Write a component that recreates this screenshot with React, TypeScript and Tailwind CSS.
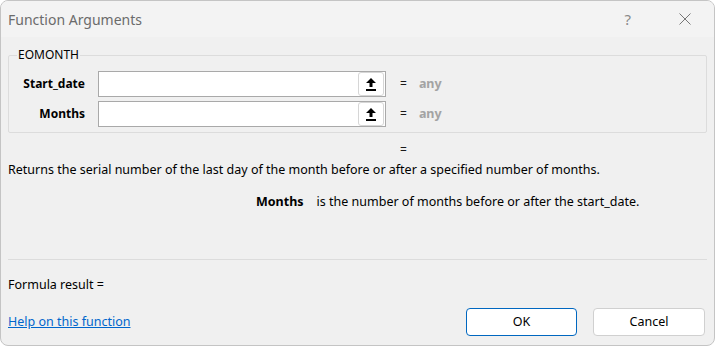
import React from "react";

const ui = { fontFamily: '"Noto Sans", "Open Sans", sans-serif' };

function UploadIcon() {
  return (
    <svg width="10" height="13" viewBox="0 0 10 13" className="block">
      <path d="M5 0 L10 5 L6.5 5 L6.5 9 L3.5 9 L3.5 5 L0 5 Z" fill="#000" />
      <rect x="0" y="11" width="10" height="2" fill="#000" />
    </svg>
  );
}

function ArgRow({ label }: { label: string }) {
  return (
    <div className="flex items-center h-[26px]">
      <div className="w-[76px] text-right text-[12px] font-bold text-black">{label}</div>
      <div className="ml-[13px] w-[288px] h-[26px] border border-[#a9a9a9] bg-white flex justify-end items-center pr-px">
        <button className="w-[26px] h-[24px] rounded-[3px] border border-[#d6d6d6] bg-white flex items-center justify-center">
          <UploadIcon />
        </button>
      </div>
      <span className="ml-[14px] text-[12px] text-[#1a1a1a]">=</span>
      <span className="ml-[12px] text-[12.5px] font-bold text-[#a3a3a3]">any</span>
    </div>
  );
}

export default function App() {
  return (
    <div
      className="w-[715px] h-[346px] bg-[#f0f0f0] rounded-[8px] border border-[#c4c4c4] overflow-hidden flex flex-col text-[#1a1a1a]"
      style={ui}
    >
      {/* Title bar */}
      <div className="h-[36px] bg-[#f3f3f3] flex items-center pl-[7px] shrink-0">
        <span className="text-[14px] text-[#6b6b6b]">Function Arguments</span>
        <span className="ml-auto text-[15px] text-[#8a8a8a] mr-[48px]">?</span>
        <svg width="12" height="12" viewBox="0 0 12 12" className="mr-[23px]">
          <path d="M0.5 0.5 L11.5 11.5 M11.5 0.5 L0.5 11.5" stroke="#777" strokeWidth="1" />
        </svg>
      </div>

      <div className="flex-1 flex flex-col px-[7px]">
        {/* Group box */}
        <fieldset className="mt-[11px] border border-[#dcdcdc] rounded-[2px] px-0 pb-[5px] pt-0">
          <legend className="ml-[8px] px-[1px] text-[12px] text-black leading-[14px]">EOMONTH</legend>
          <div className="flex flex-col gap-[4px] mt-[9px]">
            <ArgRow label="Start_date" />
            <ArgRow label="Months" />
          </div>
        </fieldset>

        <div className="text-[12px] pl-[392px] mt-[9px] leading-[16px]">=</div>
        <p className="text-[12.5px] text-black mt-[4px] leading-[16px]">
          Returns the serial number of the last day of the month before or after a specified number of months.
        </p>
        <div className="flex text-[12.5px] text-black mt-[16px] pl-[248px] leading-[16px]">
          <span className="font-bold">Months</span>
          <span className="ml-[13px]">is the number of months before or after the start_date.</span>
        </div>

        <div className="mt-[49px] h-px bg-[#dcdcdc]" />

        <div className="text-[12.5px] text-black mt-[17px] leading-[16px]">Formula result =</div>

        <div className="flex items-center mt-[15px]">
          <a href="#" className="text-[12.5px] text-[#0066cc] underline">Help on this function</a>
          <button className="ml-auto w-[111px] h-[28px] rounded-[4px] border border-[#0067c0] bg-white text-[12.5px] text-black">
            OK
          </button>
          <button className="ml-[16px] mr-[2px] w-[112px] h-[28px] rounded-[4px] border border-[#d0d0d0] bg-white text-[12.5px] text-black">
            Cancel
          </button>
        </div>
      </div>
    </div>
  );
}
